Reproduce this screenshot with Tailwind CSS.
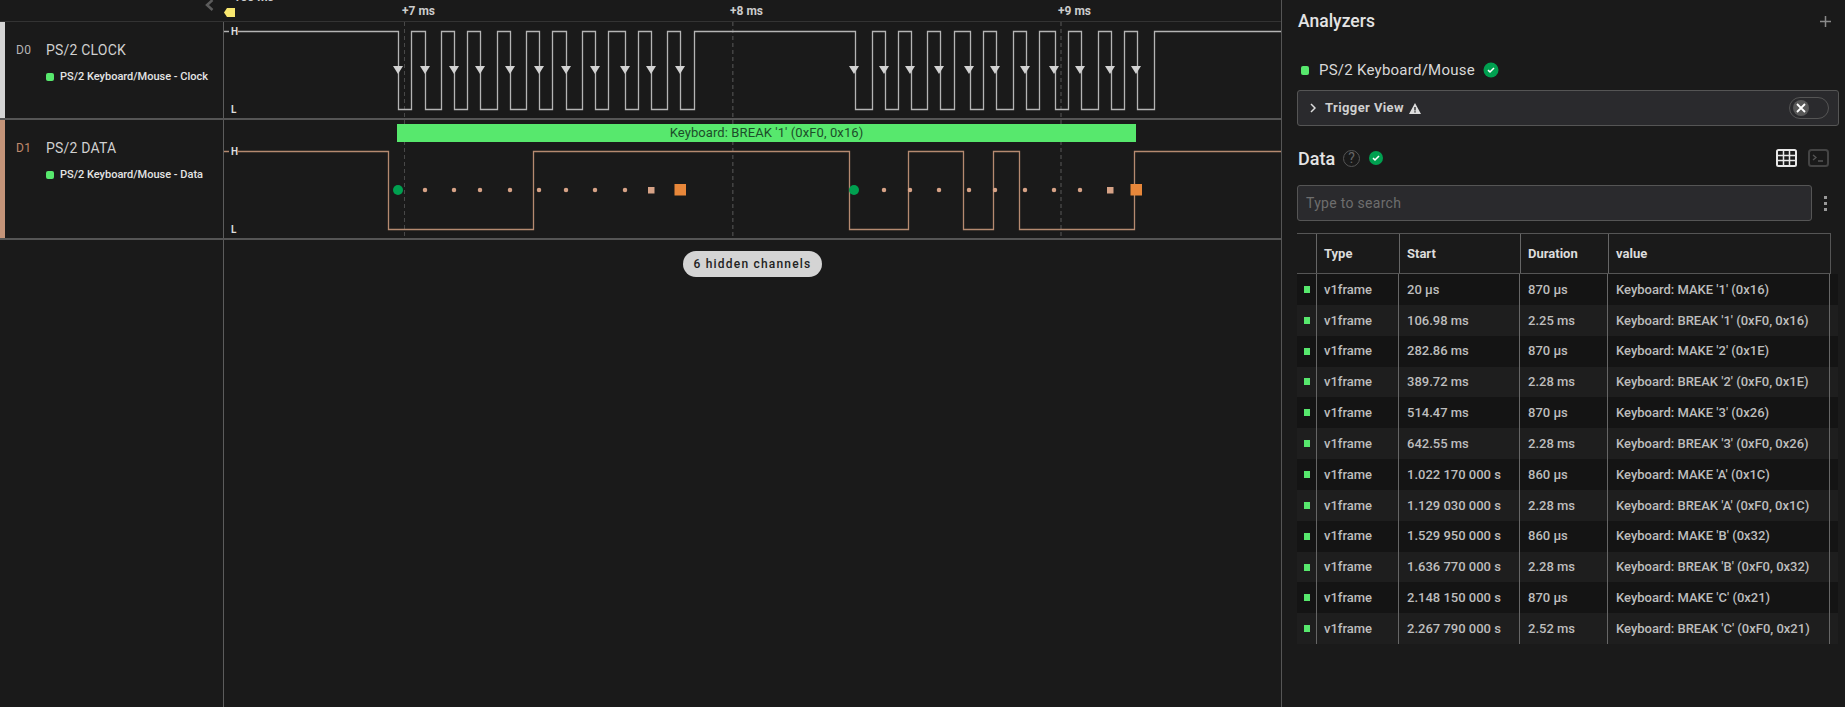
<!DOCTYPE html>
<html>
<head>
<meta charset="utf-8">
<title>Logic analyzer</title>
<script src="https://cdn.jsdelivr.net/npm/@tailwindcss/browser@4"></script>
</head>
<body class="flex h-[707px] w-[1845px] overflow-hidden bg-[#1a1a1a] font-[Roboto,sans-serif] text-[#d0d0d0]">

  <!-- timeline + channels -->
  <main class="flex h-full w-[1281px] flex-col">
    <div class="relative h-[22px] border-b border-[#333]">
      <svg class="absolute left-[205px] top-0" width="9" height="11" fill="none" stroke="#5c5c5c" stroke-width="2.500"><path d="M7.500 0 2 5l5.500 5"/></svg>
      <span class="absolute left-[227px] top-[-11px] text-[12px] font-bold leading-4 text-[#ccc]">+100 ms</span>
      <svg class="absolute left-[224px] top-[8px]" width="11" height="9"><path d="M3 0h8v9H3L0 4.500z" fill="#f8e76f"/></svg>
      <span class="absolute left-[402px] top-[3px] text-[12px] font-bold leading-4 text-[#ccc]">+7 ms</span>
      <span class="absolute left-[730px] top-[3px] text-[12px] font-bold leading-4 text-[#ccc]">+8 ms</span>
      <span class="absolute left-[1058px] top-[3px] text-[12px] font-bold leading-4 text-[#ccc]">+9 ms</span>
    </div>

    <!-- D0 -->
    <div class="flex h-[98px] border-b-2 border-[#555]">
      <div class="flex w-[224px] border-r border-[#5c5c5c]">
        <div class="w-[5px] bg-[#d4d4d4]"></div>
        <div class="w-[30px] pl-[11px] pt-[18px] text-[12px] tracking-[0.3px] leading-5 text-[#b5b5b5]">D0</div>
        <div class="pl-[11px] pt-[18px]">
          <div class="text-[14px] tracking-[0.2px] leading-5 text-[#d0d0d0]">PS/2 CLOCK</div>
          <div class="mt-[9px] flex h-4 items-center gap-[6px] text-[11px] font-medium text-[#e4e4e4]"><span class="h-2 w-2 rounded-[2px] bg-[#57e86d]"></span>PS/2 Keyboard/Mouse - Clock</div>
        </div>
      </div>
      <svg width="1057" height="96" viewBox="224 22 1057 96" fill="none">
        <path d="M404.500 22V118" stroke="#484848" stroke-dasharray="4 3"/>
        <path d="M732.800 22V118M1061 22V118" stroke="#444" stroke-width="1.500" stroke-dasharray="4 3"/>
        <path d="M224 31.500H229M238 31.500H398.500V109.500H411.500V31.500H425.500V109.500H441.500V31.500H454.500V109.500H467.500V31.500H480.500V109.500H497.500V31.500H510.500V109.500H526.500V31.500H539.500V109.500H552.500V31.500H566.500V109.500H582.500V31.500H595.500V109.500H608.500V31.500H625.500V109.500H638.500V31.500H651.500V109.500H667.500V31.500H680.500V109.500H694.500V31.500H855.500V109.500H872.500V31.500H885.500V109.500H898.500V31.500H911.500V109.500H927.500V31.500H940.500V109.500H954.500V31.500H970.500V109.500H983.500V31.500H996.500V109.500H1013.500V31.500H1026.500V109.500H1039.500V31.500H1055.500V109.500H1068.500V31.500H1081.500V109.500H1098.500V31.500H1111.500V109.500H1124.500V31.500H1137.500V109.500H1154.500V31.500H1281" stroke="#b4b4b4" stroke-width="1.300"/>
        <path fill="#d2d2d2" d="M393 66h10l-5 8zM420 66h10l-5 8zM449 66h10l-5 8zM475 66h10l-5 8zM505 66h10l-5 8zM534 66h10l-5 8zM561 66h10l-5 8zM590 66h10l-5 8zM620 66h10l-5 8zM646 66h10l-5 8zM675 66h10l-5 8zM849 66h10l-5 8zM879 66h10l-5 8zM905 66h10l-5 8zM934 66h10l-5 8zM964 66h10l-5 8zM990 66h10l-5 8zM1020 66h10l-5 8zM1049 66h10l-5 8zM1075 66h10l-5 8zM1105 66h10l-5 8zM1131 66h10l-5 8z"/>
        <text x="231" y="35" fill="#ddd" font-size="10" font-weight="700">H</text>
        <text x="231" y="113" fill="#ddd" font-size="10" font-weight="700">L</text>
      </svg>
    </div>

    <!-- D1 -->
    <div class="flex h-[120px] border-b-2 border-[#555]">
      <div class="flex w-[224px] border-r border-[#5c5c5c]">
        <div class="w-[5px] bg-[#c49479]"></div>
        <div class="w-[30px] pl-[11px] pt-[18px] text-[12px] tracking-[0.3px] leading-5 text-[#c08a6c]">D1</div>
        <div class="pl-[11px] pt-[18px]">
          <div class="text-[14px] tracking-[0.2px] leading-5 text-[#d0d0d0]">PS/2 DATA</div>
          <div class="mt-[9px] flex h-4 items-center gap-[6px] text-[11px] font-medium text-[#e4e4e4]"><span class="h-2 w-2 rounded-[2px] bg-[#57e86d]"></span>PS/2 Keyboard/Mouse - Data</div>
        </div>
      </div>
      <div class="relative h-[118px] w-[1057px]">
        <svg width="1057" height="118" viewBox="224 120 1057 118" fill="none">
          <path d="M404.500 120V238" stroke="#484848" stroke-dasharray="4 3"/>
          <path d="M732.800 120V238M1061 120V238" stroke="#444" stroke-width="1.500" stroke-dasharray="4 3"/>
          <path d="M224 151.500H229M238 151.500H388.500V229.500H533.500V151.500H849.500V229.500H908.500V151.500H963.500V229.500H993.500V151.500H1019.500V229.500H1134.500V151.500H1281" stroke="#b58a70" stroke-width="1.300"/>
          <circle cx="398" cy="190" r="5" fill="#00a050"/>
          <circle cx="854" cy="190" r="5" fill="#00a050"/>
          <path stroke="#d6a286" stroke-width="4.500" stroke-linecap="round" d="M425 190h.01M454 190h.01M480 190h.01M510 190h.01M539 190h.01M566 190h.01M595 190h.01M625 190h.01M884 190h.01M910 190h.01M939 190h.01M969 190h.01M995 190h.01M1025 190h.01M1054 190h.01M1080 190h.01"/>
          <path fill="#d6a286" d="M648 187h6.500v6.500h-6.500zM1107 187h6.500v6.500h-6.500z"/>
          <path fill="#e8873a" d="M674.500 184h11.500v11.500h-11.500zM1130.500 184h11.500v11.500h-11.500z"/>
          <text x="231" y="155" fill="#ddd" font-size="10" font-weight="700">H</text>
          <text x="231" y="233" fill="#ddd" font-size="10" font-weight="700">L</text>
        </svg>
        <div class="absolute left-[173px] top-[4px] flex h-[18px] w-[739px] items-center justify-center bg-[#57e86d] text-[13px] tracking-[0.1px] text-[#1d4d2a]">Keyboard: BREAK '1' (0xF0, 0x16)</div>
      </div>
    </div>

    <div class="flex flex-1">
      <div class="w-[224px] border-r border-[#5c5c5c]"></div>
      <div class="ml-[459px] mt-[11px] flex h-[26px] w-[139px] items-center justify-center rounded-full bg-[#d4d4d4] text-[12px] font-medium tracking-[1.2px] text-[#222]">6 hidden channels</div>
    </div>
  </main>

  <!-- analyzers panel -->
  <aside class="h-full w-[564px] border-l border-[#555] pl-[15px] pt-[9px]">
    <div class="flex h-6 items-center justify-between pr-[14px]">
      <h2 class="ml-px text-[17.5px] font-medium text-[#e4e4e4]">Analyzers</h2>
      <svg width="11" height="11" stroke="#8a8a8a" stroke-width="1.500"><path d="M5.500 0v11M0 5.500h11"/></svg>
    </div>

    <div class="ml-1 mt-[27px] flex h-5 items-center">
      <span class="h-[9px] w-2 rounded-[2px] bg-[#57e86d]"></span>
      <span class="ml-[10px] text-[15px] tracking-[0.25px] text-[#d8d8d8]">PS/2 Keyboard/Mouse</span>
      <svg class="ml-2" width="16" height="16"><circle cx="8" cy="8" r="7.500" fill="#00a050"/><path d="M5 8.200 7 10l4-4" fill="none" stroke="#fff" stroke-width="1.600"/></svg>
    </div>

    <div class="mt-[10px] flex h-9 w-[542px] items-center rounded-[3px] border border-[#555] bg-[#2a2a2d] pl-[12px]">
      <svg width="6" height="10" fill="none" stroke="#ddd" stroke-width="1.500"><path d="M1 1l4 4-4 4"/></svg>
      <span class="ml-[9px] text-[13px] font-bold tracking-[0.4px] text-[#d0d0d0]">Trigger View</span>
      <svg class="ml-[5px]" width="12" height="11"><path fill-rule="evenodd" fill="#ddd" d="M6 0l6 11H0zM5.300 4v3.500h1.400V4zM5.300 8.300v1.300h1.400V8.300z"/></svg>
      <div class="ml-auto mr-[9px] flex h-[22px] w-10 items-center rounded-full border border-[#555] pl-[3px]">
        <div class="flex h-4 w-4 items-center justify-center rounded-full bg-[#585858]">
          <svg width="10" height="10" stroke="#fff" stroke-width="1.800"><path d="M1 1l8 8M9 1l-8 8"/></svg>
        </div>
      </div>
    </div>

    <div class="mt-5 flex h-6 items-center">
      <h2 class="ml-px text-[18px] font-medium text-[#e4e4e4]">Data</h2>
      <div class="ml-[8px] flex h-[17px] w-[17px] items-center justify-center rounded-full border border-[#555] text-[14px] text-[#666]">?</div>
      <svg class="ml-[9px]" width="14" height="14"><circle cx="7" cy="7" r="7" fill="#00a050"/><path d="M4 7.200 6 9l4-4" fill="none" stroke="#fff" stroke-width="1.600"/></svg>
      <svg class="ml-[393px]" width="21" height="18" fill="none" stroke="#e8e8e8"><rect x="1" y="1" width="19" height="16" rx="1.500" stroke-width="2"/><path stroke-width="1.500" d="M7.500 1v16M13.500 1v16M1 6.500h19M1 11.500h19"/></svg>
      <svg class="ml-[11px]" width="21" height="18" fill="none" stroke="#444"><rect x="1" y="1" width="19" height="16" rx="2.500" stroke-width="2"/><path stroke="#555" stroke-width="1.300" d="M5 6l3 2.500L5 11M10 12h5"/></svg>
    </div>

    <div class="mt-[15px] flex h-9 items-center">
      <div class="flex h-9 w-[515px] items-center rounded-[3px] border border-[#555] bg-[#2a2a2d] pl-[8px] text-[14px] tracking-[0.3px] text-[#6e6e6e]">Type to search</div>
      <div class="ml-[12px] flex flex-col gap-[3px]">
        <span class="h-[3px] w-[3px] bg-[#999]"></span>
        <span class="h-[3px] w-[3px] bg-[#999]"></span>
        <span class="h-[3px] w-[3px] bg-[#999]"></span>
      </div>
    </div>

    <!-- table -->
    <div class="mt-3 flex h-[41px] w-[534px] items-center border-y border-r border-[#555] text-[13px] font-bold text-[#dcdcdc]">
      <div class="w-[19px]"></div>
      <div class="flex h-full w-[83px] items-center border-l border-[#666] pl-[7px] pt-px">Type</div>
      <div class="flex h-full w-[121px] items-center border-l border-[#666] pl-[7px] pt-px">Start</div>
      <div class="flex h-full w-[88px] items-center border-l border-[#666] pl-[7px] pt-px">Duration</div>
      <div class="flex h-full flex-1 items-center border-l border-[#666] pl-[7px] pt-px">value</div>
    </div>

    <div class="w-[541px] text-[13px] font-medium text-[#bdbdbd]">
      <div class="flex h-[30.85px] items-center bg-[#141414]"><div class="flex w-[19px] justify-center"><span class="h-[7px] w-[6px] bg-[#57e86d]"></span></div><div class="flex h-full w-[82px] items-center border-l border-[#666] pl-[7px]">v1frame</div><div class="flex h-full w-[121px] items-center border-l border-[#666] pl-2">20 µs</div><div class="flex h-full w-[88px] items-center border-l border-[#666] pl-2">870 µs</div><div class="flex h-full w-[223px] items-center border-x border-[#666] pl-2">Keyboard: MAKE '1' (0x16)</div></div>
      <div class="flex h-[30.85px] items-center bg-[#1e1e1e]"><div class="flex w-[19px] justify-center"><span class="h-[7px] w-[6px] bg-[#57e86d]"></span></div><div class="flex h-full w-[82px] items-center border-l border-[#666] pl-[7px]">v1frame</div><div class="flex h-full w-[121px] items-center border-l border-[#666] pl-2">106.98 ms</div><div class="flex h-full w-[88px] items-center border-l border-[#666] pl-2">2.25 ms</div><div class="flex h-full w-[223px] items-center border-x border-[#666] pl-2">Keyboard: BREAK '1' (0xF0, 0x16)</div></div>
      <div class="flex h-[30.85px] items-center bg-[#141414]"><div class="flex w-[19px] justify-center"><span class="h-[7px] w-[6px] bg-[#57e86d]"></span></div><div class="flex h-full w-[82px] items-center border-l border-[#666] pl-[7px]">v1frame</div><div class="flex h-full w-[121px] items-center border-l border-[#666] pl-2">282.86 ms</div><div class="flex h-full w-[88px] items-center border-l border-[#666] pl-2">870 µs</div><div class="flex h-full w-[223px] items-center border-x border-[#666] pl-2">Keyboard: MAKE '2' (0x1E)</div></div>
      <div class="flex h-[30.85px] items-center bg-[#1e1e1e]"><div class="flex w-[19px] justify-center"><span class="h-[7px] w-[6px] bg-[#57e86d]"></span></div><div class="flex h-full w-[82px] items-center border-l border-[#666] pl-[7px]">v1frame</div><div class="flex h-full w-[121px] items-center border-l border-[#666] pl-2">389.72 ms</div><div class="flex h-full w-[88px] items-center border-l border-[#666] pl-2">2.28 ms</div><div class="flex h-full w-[223px] items-center border-x border-[#666] pl-2">Keyboard: BREAK '2' (0xF0, 0x1E)</div></div>
      <div class="flex h-[30.85px] items-center bg-[#141414]"><div class="flex w-[19px] justify-center"><span class="h-[7px] w-[6px] bg-[#57e86d]"></span></div><div class="flex h-full w-[82px] items-center border-l border-[#666] pl-[7px]">v1frame</div><div class="flex h-full w-[121px] items-center border-l border-[#666] pl-2">514.47 ms</div><div class="flex h-full w-[88px] items-center border-l border-[#666] pl-2">870 µs</div><div class="flex h-full w-[223px] items-center border-x border-[#666] pl-2">Keyboard: MAKE '3' (0x26)</div></div>
      <div class="flex h-[30.85px] items-center bg-[#1e1e1e]"><div class="flex w-[19px] justify-center"><span class="h-[7px] w-[6px] bg-[#57e86d]"></span></div><div class="flex h-full w-[82px] items-center border-l border-[#666] pl-[7px]">v1frame</div><div class="flex h-full w-[121px] items-center border-l border-[#666] pl-2">642.55 ms</div><div class="flex h-full w-[88px] items-center border-l border-[#666] pl-2">2.28 ms</div><div class="flex h-full w-[223px] items-center border-x border-[#666] pl-2">Keyboard: BREAK '3' (0xF0, 0x26)</div></div>
      <div class="flex h-[30.85px] items-center bg-[#141414]"><div class="flex w-[19px] justify-center"><span class="h-[7px] w-[6px] bg-[#57e86d]"></span></div><div class="flex h-full w-[82px] items-center border-l border-[#666] pl-[7px]">v1frame</div><div class="flex h-full w-[121px] items-center border-l border-[#666] pl-2">1.022 170 000 s</div><div class="flex h-full w-[88px] items-center border-l border-[#666] pl-2">860 µs</div><div class="flex h-full w-[223px] items-center border-x border-[#666] pl-2">Keyboard: MAKE 'A' (0x1C)</div></div>
      <div class="flex h-[30.85px] items-center bg-[#1e1e1e]"><div class="flex w-[19px] justify-center"><span class="h-[7px] w-[6px] bg-[#57e86d]"></span></div><div class="flex h-full w-[82px] items-center border-l border-[#666] pl-[7px]">v1frame</div><div class="flex h-full w-[121px] items-center border-l border-[#666] pl-2">1.129 030 000 s</div><div class="flex h-full w-[88px] items-center border-l border-[#666] pl-2">2.28 ms</div><div class="flex h-full w-[223px] items-center border-x border-[#666] pl-2">Keyboard: BREAK 'A' (0xF0, 0x1C)</div></div>
      <div class="flex h-[30.85px] items-center bg-[#141414]"><div class="flex w-[19px] justify-center"><span class="h-[7px] w-[6px] bg-[#57e86d]"></span></div><div class="flex h-full w-[82px] items-center border-l border-[#666] pl-[7px]">v1frame</div><div class="flex h-full w-[121px] items-center border-l border-[#666] pl-2">1.529 950 000 s</div><div class="flex h-full w-[88px] items-center border-l border-[#666] pl-2">860 µs</div><div class="flex h-full w-[223px] items-center border-x border-[#666] pl-2">Keyboard: MAKE 'B' (0x32)</div></div>
      <div class="flex h-[30.85px] items-center bg-[#1e1e1e]"><div class="flex w-[19px] justify-center"><span class="h-[7px] w-[6px] bg-[#57e86d]"></span></div><div class="flex h-full w-[82px] items-center border-l border-[#666] pl-[7px]">v1frame</div><div class="flex h-full w-[121px] items-center border-l border-[#666] pl-2">1.636 770 000 s</div><div class="flex h-full w-[88px] items-center border-l border-[#666] pl-2">2.28 ms</div><div class="flex h-full w-[223px] items-center border-x border-[#666] pl-2">Keyboard: BREAK 'B' (0xF0, 0x32)</div></div>
      <div class="flex h-[30.85px] items-center bg-[#141414]"><div class="flex w-[19px] justify-center"><span class="h-[7px] w-[6px] bg-[#57e86d]"></span></div><div class="flex h-full w-[82px] items-center border-l border-[#666] pl-[7px]">v1frame</div><div class="flex h-full w-[121px] items-center border-l border-[#666] pl-2">2.148 150 000 s</div><div class="flex h-full w-[88px] items-center border-l border-[#666] pl-2">870 µs</div><div class="flex h-full w-[223px] items-center border-x border-[#666] pl-2">Keyboard: MAKE 'C' (0x21)</div></div>
      <div class="flex h-[30.85px] items-center bg-[#1e1e1e]"><div class="flex w-[19px] justify-center"><span class="h-[7px] w-[6px] bg-[#57e86d]"></span></div><div class="flex h-full w-[82px] items-center border-l border-[#666] pl-[7px]">v1frame</div><div class="flex h-full w-[121px] items-center border-l border-[#666] pl-2">2.267 790 000 s</div><div class="flex h-full w-[88px] items-center border-l border-[#666] pl-2">2.52 ms</div><div class="flex h-full w-[223px] items-center border-x border-[#666] pl-2">Keyboard: BREAK 'C' (0xF0, 0x21)</div></div>
    </div>
  </aside>

</body>
</html>
